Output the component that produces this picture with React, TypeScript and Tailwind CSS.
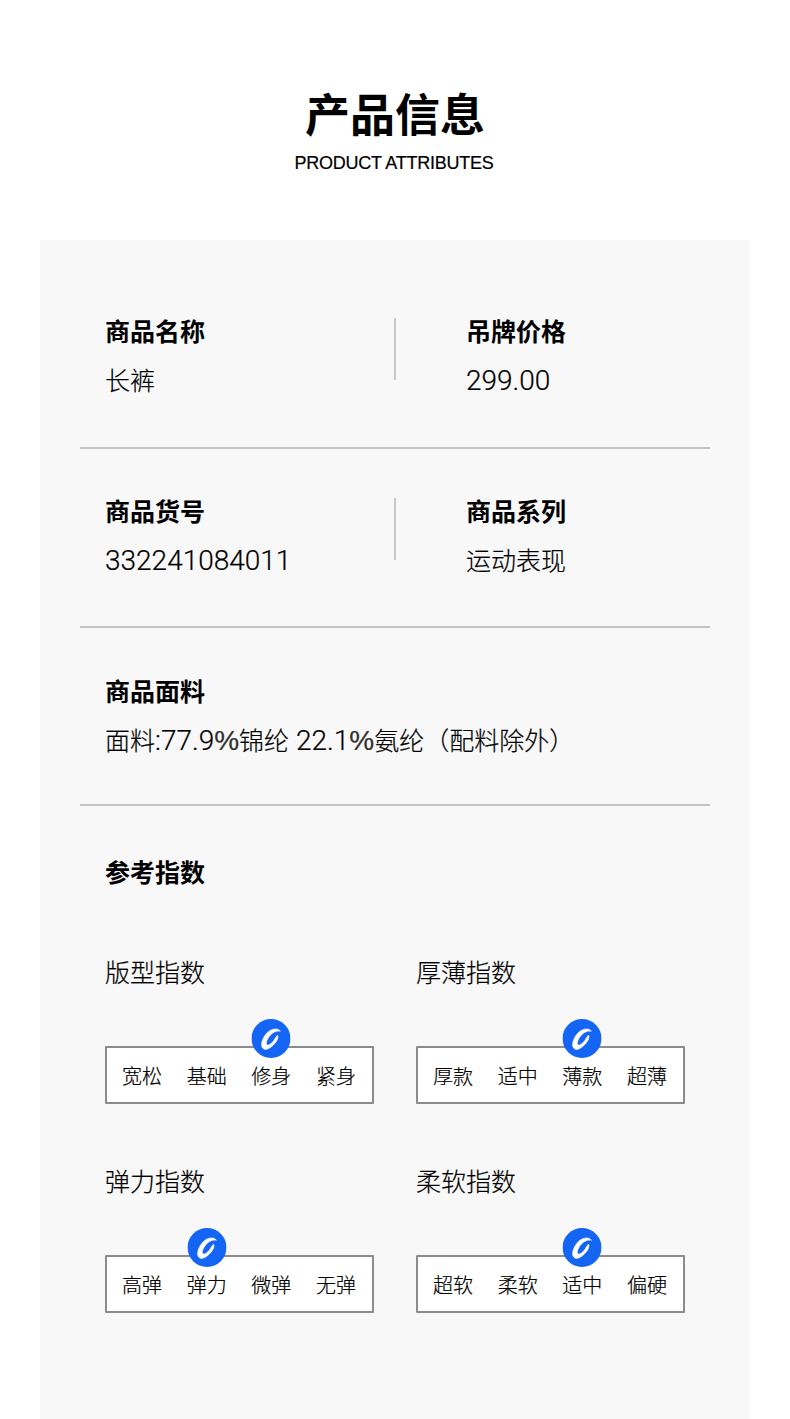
import type { ReactNode } from 'react';

const font = "[font-family:'Liberation_Sans','Noto_Sans_CJK_SC',sans-serif]";

function Logo() {
  return (
    <svg viewBox="0 0 39 39" className="w-full h-full">
      <circle cx="19.5" cy="19.5" r="19.5" fill="#1565f5" />
      <path
        d="M30 14C28 9.5 20 9.5 14.5 15C9.5 20 7.5 26 10.5 28.5C13.5 31 20 27.5 24 23.5C26 21.5 27.2 19 26.5 17.2C25.8 18.2 25 18.8 24 19.5C22 22.5 18 25.5 15.5 25.5C13.5 25.5 13.5 23.5 15 21C17 17.5 21 14 25 13.5C27 13.2 28.5 13.5 30 14Z"
        fill="#fff"
        stroke="#fff"
        strokeWidth="0.6"
        strokeLinejoin="round"
        transform="rotate(-10 19.5 19.5)"
      />
    </svg>
  );
}

// latin runs sit larger than the CJK text around them
function L({ children }: { children: ReactNode }) {
  return <span className="font-['Roboto'] text-[28px] leading-[0]">{children}</span>;
}

function Pct() {
  return <span className="font-['Liberation_Sans'] text-[#333]">%</span>;
}

function Paren({ children }: { children: ReactNode }) {
  return <span className="font-['Noto_Sans_CJK_TC'] leading-[0]">{children}</span>;
}

function Field({ label, children }: { label: string; children: ReactNode }) {
  return (
    <div>
      <div className="text-[25px] leading-[28px] font-bold text-black">{label}</div>
      <div className="mt-[21px] text-[25px] leading-[28px] font-light text-black whitespace-nowrap [-webkit-text-stroke:0.2px_black]">{children}</div>
    </div>
  );
}

function IndexBox({ title, options, active }: { title: string; options: string[]; active: number }) {
  return (
    <div className="w-[269px]">
      <div className="text-[25px] leading-[30px] font-light text-black [-webkit-text-stroke:0.2px_black]">{title}</div>
      <div className="mt-[58px] h-[58px] flex items-center justify-between pl-[15px] pr-[16px] pt-[4px] bg-white border-2 border-[#8c8c8c] rounded-[1px]">
        {options.map((o, i) => (
          <div key={o} className="relative text-[20px] leading-[24px] font-light text-black [-webkit-text-stroke:0.2px_black]">
            {o}
            {i === active && (
              <div className="absolute left-1/2 -translate-x-1/2 top-[-46px] w-[39px] h-[39px]">
                <Logo />
              </div>
            )}
          </div>
        ))}
      </div>
    </div>
  );
}

export default function App() {
  return (
    <div className={`w-[790px] h-[1419px] overflow-hidden bg-white ${font}`}>
      {/* Heading */}
      <div className="h-[240px] pt-[91px] text-center">
        <div className="text-[45px] leading-[52px] font-bold text-black">产品信息</div>
        <div className="mt-[9px] pr-[2px] text-[18px] leading-[22px] tracking-[-0.25px] text-black [-webkit-text-stroke:0.2px_black]">PRODUCT ATTRIBUTES</div>
      </div>

      <div className="mx-[40px] h-[1179px] px-[40px] bg-[#f8f8f8]">
        <div className="flex h-[209px] pt-[78px] pl-[25px] border-b-2 border-[#c4c4c4]">
          <div className="w-[291px] h-[62px] border-r-2 border-[#c8c8c8]">
            <Field label="商品名称">长裤</Field>
          </div>
          <div className="pl-[70px]">
            <Field label="吊牌价格"><L>299.00</L></Field>
          </div>
        </div>

        <div className="flex h-[179px] pt-[49px] pl-[25px] border-b-2 border-[#c4c4c4]">
          <div className="w-[291px] h-[62px] border-r-2 border-[#c8c8c8]">
            <Field label="商品货号"><L>332241084011</L></Field>
          </div>
          <div className="pl-[70px]">
            <Field label="商品系列">运动表现</Field>
          </div>
        </div>

        <div className="h-[178px] pt-[50px] pl-[25px] border-b-2 border-[#c4c4c4]">
          <Field label="商品面料">
            面料<L>:77.9<Pct /></L>锦纶<L> 22.1<Pct /></L>氨纶<Paren>（</Paren>配料除外<Paren>）</Paren>
          </Field>
        </div>

        <div className="pl-[25px] pt-[53px]">
          <div className="text-[25px] leading-[28px] font-bold text-black">参考指数</div>
          <div className="mt-[71px] grid grid-cols-[268px_268px] gap-x-[43px] gap-y-[63px]">
            <IndexBox title="版型指数" options={['宽松', '基础', '修身', '紧身']} active={2} />
            <IndexBox title="厚薄指数" options={['厚款', '适中', '薄款', '超薄']} active={2} />
            <IndexBox title="弹力指数" options={['高弹', '弹力', '微弹', '无弹']} active={1} />
            <IndexBox title="柔软指数" options={['超软', '柔软', '适中', '偏硬']} active={2} />
          </div>
        </div>
      </div>
    </div>
  );
}
